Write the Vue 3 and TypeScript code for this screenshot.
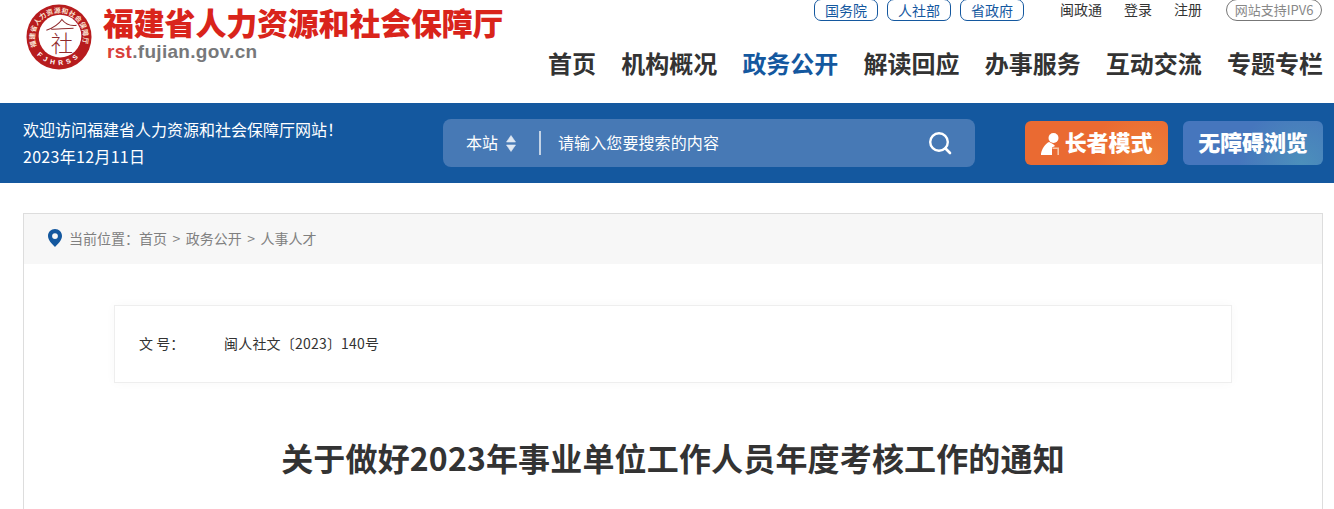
<script setup lang="ts">
const govLinks = ['国务院', '人社部', '省政府']
const userLinks = ['闽政通', '登录', '注册']
const navItems = ['首页', '机构概况', '政务公开', '解读回应', '办事服务', '互动交流', '专题专栏']
const activeNav = '政务公开'
const crumbs = ['首页', '政务公开', '人事人才']
</script>

<template>
  <div class="page">
    <header class="header">
      <div class="brand">
        <svg class="emblem" width="66" height="66" viewBox="0 0 68 68">
          <defs>
            <path id="ringTop" d="M11 44 A25 25 0 1 1 57 44" />
            <path id="ringBottom" d="M5.5 41 A29.5 29.5 0 0 0 62.5 41" />
          </defs>
          <circle cx="34" cy="34" r="33.5" fill="#b71c1e" />
          <circle cx="35" cy="33" r="22" fill="#fff" />
          <text class="ring-text" font-size="7">
            <textPath href="#ringTop" textLength="95">福建省人力资源和社会保障厅</textPath>
          </text>
          <text class="ring-latin" font-size="7">
            <textPath href="#ringBottom" startOffset="50%" text-anchor="middle" letter-spacing="4">FJHRSS</textPath>
          </text>
          <path d="M21 27 C27 25 33 22 37 16 C40 20 45 23 52 22 M26 26 C32 26 42 25 49 25" fill="none" stroke="#8f2a2c" stroke-width="1.1" />
          <text class="seal" x="37" y="49" text-anchor="middle" font-size="23">社</text>
        </svg>
        <div class="brand-text">
          <div class="brand-name">福建省人力资源和社会保障厅</div>
          <div class="brand-url"><span>rst</span>.fujian.gov.cn</div>
        </div>
      </div>
      <div class="header-right">
        <div class="top-row">
          <div class="gov-links">
            <a v-for="link in govLinks" :key="link" class="gov-link">{{ link }}</a>
          </div>
          <div class="user-links">
            <a v-for="link in userLinks" :key="link">{{ link }}</a>
          </div>
          <span class="ipv6">网站支持IPV6</span>
        </div>
        <nav class="nav">
          <a v-for="item in navItems" :key="item" :class="{ active: item === activeNav }">{{ item }}</a>
        </nav>
      </div>
    </header>

    <section class="bar">
      <div class="welcome">
        <p>欢迎访问福建省人力资源和社会保障厅网站！</p>
        <p class="date">2023年12月11日</p>
      </div>
      <div class="search">
        <span class="scope">本站</span>
        <svg class="updown" width="10" height="17" viewBox="0 0 10 17">
          <path d="M5 0.5 L9.5 7 H0.5 Z M5 16.5 L9.5 10 H0.5 Z" fill="#dfe8f3" stroke="#dfe8f3" stroke-width="0.6" stroke-linejoin="round" />
        </svg>
        <i class="divider"></i>
        <span class="placeholder">请输入您要搜索的内容</span>
        <svg class="lens" width="24" height="24" viewBox="0 0 24 24">
          <circle cx="11" cy="11" r="8.8" fill="none" stroke="#fff" stroke-width="2.4" />
          <path d="M17.5 17.5 L22 22" stroke="#fff" stroke-width="2.6" stroke-linecap="round" />
        </svg>
      </div>
      <div class="modes">
        <a class="mode elder">
          <svg class="elder-icon" width="20" height="24" viewBox="0 0 20 24">
            <circle cx="12.5" cy="6" r="5" fill="#fff" />
            <path d="M12 3.6 H17 V5 H12 Z" fill="#fff" />
            <path d="M8 10 C10 11 13 12 14 14 L11 15.5 V23 H0 V21.5 C1 16.5 4 12 8 10 Z" fill="#fff" />
            <path d="M11.5 16.2 H17.2 V23" fill="none" stroke="#f8c6a6" stroke-width="1.6" />
          </svg>
          <span>长者模式</span>
        </a>
        <a class="mode access"><span>无障碍浏览</span></a>
      </div>
    </section>

    <main class="card">
      <div class="crumbs">
        <svg width="14" height="18" viewBox="0 0 14 18">
          <path fill-rule="evenodd" d="M7 0 C11 0 14 3 14 7 C14 11 10 15 7 18 C4 15 0 11 0 7 C0 3 3 0 7 0 Z M7 4.2 A2.9 2.9 0 1 0 7 10 A2.9 2.9 0 1 0 7 4.2 Z" fill="#14589f" />
        </svg>
        <span class="crumb-label">当前位置：</span>
        <template v-for="(crumb, i) in crumbs" :key="crumb">
          <span v-if="i > 0" class="crumb-sep">&gt;</span>
          <span>{{ crumb }}</span>
        </template>
      </div>
      <div class="meta">
        <span class="meta-key">文 号：</span>
        <span class="meta-value">闽人社文〔2023〕140号</span>
      </div>
      <h1 class="title">关于做好2023年事业单位工作人员年度考核工作的通知</h1>
    </main>
  </div>
</template>

<style>
html,
body {
  margin: 0;
  background: #fff;
  overflow: hidden;
}
</style>

<style scoped>
.page {
  height: 509px;
  overflow: hidden;
  font-family: "Noto Sans CJK SC", "Noto Sans", sans-serif;
  color: #333;
}

.header {
  display: flex;
  justify-content: space-between;
  height: 103px;
  padding: 3px 12px 0 26px;
  box-sizing: border-box;
}

.brand {
  display: flex;
  gap: 11px;
  height: 70px;
}

.emblem {
  flex: none;
  margin-top: 1px;
}

.ring-text {
  fill: #fbe6d6;
  font-weight: 700;
}

.ring-latin {
  fill: #fff;
  font-family: "Liberation Sans", sans-serif;
  font-weight: 700;
}

.seal {
  fill: #8f2a2c;
  font-weight: 300;
}

.brand-name {
  font-size: 31px;
  line-height: 38px;
  font-weight: 900;
  letter-spacing: -0.2px;
  color: #d9241b;
  white-space: nowrap;
}

.brand-url {
  margin: 0 0 0 4px;
  font-family: "Liberation Sans", sans-serif;
  font-size: 19px;
  line-height: 22px;
  font-weight: 700;
  letter-spacing: 0.3px;
  color: #77787a;
}

.brand-url span {
  color: #d9403a;
}

.header-right {
  display: flex;
  flex-direction: column;
  align-items: flex-end;
  margin-top: -4px;
}

.top-row {
  display: flex;
  align-items: flex-start;
  height: 22px;
  font-size: 14px;
}

.gov-links {
  display: flex;
  gap: 9px;
}

.gov-link {
  width: 64px;
  height: 22px;
  line-height: 20px;
  box-sizing: border-box;
  border: 1px solid #14589f;
  border-radius: 7px;
  text-align: center;
  color: #14589f;
}

.user-links {
  display: flex;
  gap: 22px;
  margin-left: 36px;
  line-height: 21px;
  color: #333;
}

.ipv6 {
  width: 96px;
  height: 22px;
  margin-left: 24px;
  box-sizing: border-box;
  border: 1px solid #777;
  border-radius: 11px;
  font-size: 13px;
  line-height: 20px;
  text-align: center;
  color: #888;
  white-space: nowrap;
}

.nav {
  display: flex;
  gap: 25.17px;
  margin: 24px -1px 0 0;
  font-size: 24px;
  line-height: 36px;
  font-weight: 700;
  color: #333;
  white-space: nowrap;
}

.nav .active {
  color: #14589f;
}

.bar {
  display: flex;
  align-items: center;
  height: 80px;
  padding: 0 11px 0 23px;
  background: #14589f;
  color: #fff;
}

.welcome {
  width: 420px;
  font-size: 16px;
  line-height: 27px;
}

.welcome p {
  margin: 0;
}

.date {
  letter-spacing: 0.3px;
}

.search {
  display: flex;
  align-items: center;
  width: 532px;
  height: 48px;
  padding: 0 23px;
  box-sizing: border-box;
  border-radius: 8px;
  background: #4779b5;
  font-size: 16px;
  line-height: 22px;
}

.updown {
  margin-left: 8px;
}

.divider {
  width: 2px;
  height: 24px;
  margin: 0 17px 0 23px;
  background: #c3d3e6;
}

.scope,
.placeholder {
  padding-bottom: 2px;
}

.placeholder {
  flex: 1;
  letter-spacing: 0.1px;
}

.modes {
  display: flex;
  gap: 15px;
  margin-left: auto;
}

.mode {
  display: flex;
  align-items: center;
  justify-content: center;
  gap: 4px;
  height: 44px;
  border-radius: 6px;
  font-size: 22px;
  font-weight: 900;
  white-space: nowrap;
}

.mode span {
  padding-bottom: 4px;
  letter-spacing: -0.1px;
}

.elder {
  width: 143px;
  background: radial-gradient(circle at 85% 100%, #ed8139, #ea6a32 45%);
}

.elder-icon {
  margin-top: 2px;
}

.access {
  width: 140px;
  background: radial-gradient(circle at 85% 100%, #4c90bb, #4676bd 50%);
}

.card {
  margin: 30px 11px 0 23px;
  height: 320px;
  border: 1px solid #ddd;
  border-bottom: none;
}

.crumbs {
  display: flex;
  align-items: center;
  height: 50px;
  padding: 0 0 2px 24px;
  box-sizing: border-box;
  background: #f7f7f7;
  font-size: 14px;
  color: #808080;
}

.crumb-label {
  margin-left: 7px;
}

.crumb-sep {
  margin: 0 5.5px;
}

.meta {
  display: flex;
  align-items: center;
  height: 78px;
  margin: 41px 90px 0;
  padding: 0 0 2px 24px;
  box-sizing: border-box;
  border: 1px solid #eee;
  box-shadow: 0 0 10px rgba(0, 0, 0, 0.03);
  font-size: 14px;
  color: #333;
}

.meta-key {
  width: 85px;
}

.meta-value {
  letter-spacing: 0.2px;
}

.title {
  margin: 50px 0 0;
  font-size: 32px;
  line-height: 48px;
  font-weight: 700;
  letter-spacing: 0.16px;
  text-align: center;
  color: #333;
}
</style>
